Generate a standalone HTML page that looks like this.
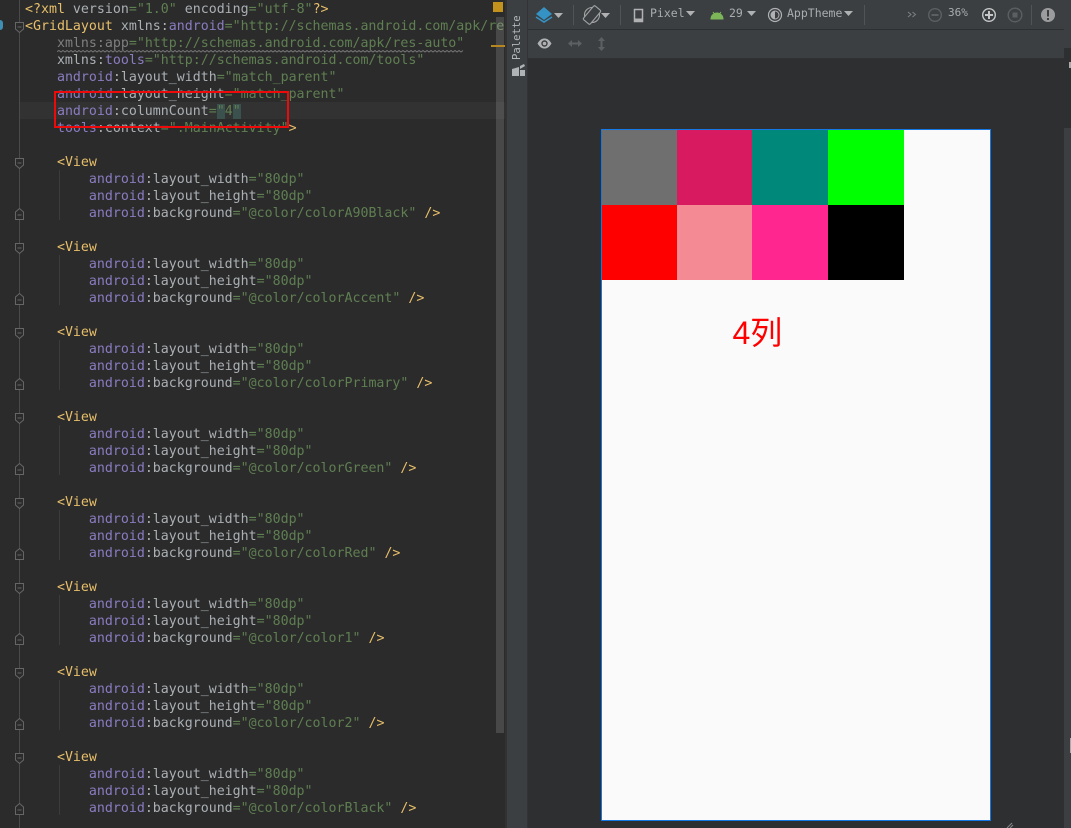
<!DOCTYPE html>
<html><head><meta charset="utf-8">
<style>
html,body{margin:0;padding:0;background:#2d2f31;width:1071px;height:828px;overflow:hidden}
.a{position:absolute}
#ed{left:0;top:0;width:505px;height:828px;background:#2b2b2b;overflow:hidden}
pre{position:absolute;left:25px;top:1px;margin:0;font:13.28px/17px "DejaVu Sans Mono","Liberation Mono",monospace;color:#aab0b4;white-space:pre;width:480px;overflow:hidden}
.t{color:#e8bf6a}.n{color:#8a7cc0}.s{color:#5f7f52}.h{background:#3b514d}
.g{position:absolute;width:1px;background:#3b3b3b}
.ui{font:11.5px/14px "DejaVu Sans Mono","Liberation Mono",monospace;color:#a9adb0;position:absolute}
</style></head><body>
<div class="a" id="ed">
<div class="a" style="left:20px;top:102px;width:485px;height:17px;background:#323232"></div>
<div class="a" style="left:19px;top:0;width:1px;height:828px;background:#4a4a4a"></div>
<div class="g" style="left:59px;top:170px;height:50px"></div>
<div class="g" style="left:59px;top:255px;height:50px"></div>
<div class="g" style="left:59px;top:340px;height:50px"></div>
<div class="g" style="left:59px;top:425px;height:50px"></div>
<div class="g" style="left:59px;top:510px;height:50px"></div>
<div class="g" style="left:59px;top:595px;height:50px"></div>
<div class="g" style="left:59px;top:680px;height:50px"></div>
<div class="g" style="left:59px;top:765px;height:50px"></div>
<svg class="a" style="left:57px;top:50px" width="408" height="3"><path d="M0 1.5 L2 .5 L4 2 L6 .5 L8 2 L10 .5 L12 2 L14 .5 L16 2 L18 .5 L20 2 L22 .5 L24 2 L26 .5 L28 2 L30 .5 L32 2 L34 .5 L36 2 L38 .5 L40 2 L42 .5 L44 2 L46 .5 L48 2 L50 .5 L52 2 L54 .5 L56 2 L58 .5 L60 2 L62 .5 L64 2 L66 .5 L68 2 L70 .5 L72 2 L74 .5 L76 2 L78 .5 L80 2 L82 .5 L84 2 L86 .5 L88 2 L90 .5 L92 2 L94 .5 L96 2 L98 .5 L100 2 L102 .5 L104 2 L106 .5 L108 2 L110 .5 L112 2 L114 .5 L116 2 L118 .5 L120 2 L122 .5 L124 2 L126 .5 L128 2 L130 .5 L132 2 L134 .5 L136 2 L138 .5 L140 2 L142 .5 L144 2 L146 .5 L148 2 L150 .5 L152 2 L154 .5 L156 2 L158 .5 L160 2 L162 .5 L164 2 L166 .5 L168 2 L170 .5 L172 2 L174 .5 L176 2 L178 .5 L180 2 L182 .5 L184 2 L186 .5 L188 2 L190 .5 L192 2 L194 .5 L196 2 L198 .5 L200 2 L202 .5 L204 2 L206 .5 L208 2 L210 .5 L212 2 L214 .5 L216 2 L218 .5 L220 2 L222 .5 L224 2 L226 .5 L228 2 L230 .5 L232 2 L234 .5 L236 2 L238 .5 L240 2 L242 .5 L244 2 L246 .5 L248 2 L250 .5 L252 2 L254 .5 L256 2 L258 .5 L260 2 L262 .5 L264 2 L266 .5 L268 2 L270 .5 L272 2 L274 .5 L276 2 L278 .5 L280 2 L282 .5 L284 2 L286 .5 L288 2 L290 .5 L292 2 L294 .5 L296 2 L298 .5 L300 2 L302 .5 L304 2 L306 .5 L308 2 L310 .5 L312 2 L314 .5 L316 2 L318 .5 L320 2 L322 .5 L324 2 L326 .5 L328 2 L330 .5 L332 2 L334 .5 L336 2 L338 .5 L340 2 L342 .5 L344 2 L346 .5 L348 2 L350 .5 L352 2 L354 .5 L356 2 L358 .5 L360 2 L362 .5 L364 2 L366 .5 L368 2 L370 .5 L372 2 L374 .5 L376 2 L378 .5 L380 2 L382 .5 L384 2 L386 .5 L388 2 L390 .5 L392 2 L394 .5 L396 2 L398 .5 L400 2 L402 .5 L404 2 L406 .5" fill="none" stroke="#777" stroke-width="1"/></svg>
<pre><span class="t">&lt;?xml</span> version<span class="s">="1.0"</span> encoding<span class="s">="utf-8"</span><span class="t">?&gt;</span>
<span class="t">&lt;GridLayout</span> xmlns:<span class="n">android</span><span class="s">="http://schemas.android.com/apk/res/android"</span>
    <span style="color:#7f7f7f">xmlns:app</span><span class="s">="http://schemas.android.com/apk/res-auto"</span>
    xmlns:<span class="n">tools</span><span class="s">="http://schemas.android.com/tools"</span>
    <span class="n">android</span>:layout_width<span class="s">="match_parent"</span>
    <span class="n">android</span>:layout_height<span class="s">="match_parent"</span>
    <span class="n">android</span>:columnCount<span class="s">=<span class="h">"</span>4<span class="h">"</span></span>
    <span class="n">tools</span>:context<span class="s">=".MainActivity"</span><span class="t">&gt;</span>

    <span class="t">&lt;View</span>
        <span class="n">android</span>:layout_width<span class="s">="80dp"</span>
        <span class="n">android</span>:layout_height<span class="s">="80dp"</span>
        <span class="n">android</span>:background<span class="s">="@color/colorA90Black"</span> <span class="t">/&gt;</span>

    <span class="t">&lt;View</span>
        <span class="n">android</span>:layout_width<span class="s">="80dp"</span>
        <span class="n">android</span>:layout_height<span class="s">="80dp"</span>
        <span class="n">android</span>:background<span class="s">="@color/colorAccent"</span> <span class="t">/&gt;</span>

    <span class="t">&lt;View</span>
        <span class="n">android</span>:layout_width<span class="s">="80dp"</span>
        <span class="n">android</span>:layout_height<span class="s">="80dp"</span>
        <span class="n">android</span>:background<span class="s">="@color/colorPrimary"</span> <span class="t">/&gt;</span>

    <span class="t">&lt;View</span>
        <span class="n">android</span>:layout_width<span class="s">="80dp"</span>
        <span class="n">android</span>:layout_height<span class="s">="80dp"</span>
        <span class="n">android</span>:background<span class="s">="@color/colorGreen"</span> <span class="t">/&gt;</span>

    <span class="t">&lt;View</span>
        <span class="n">android</span>:layout_width<span class="s">="80dp"</span>
        <span class="n">android</span>:layout_height<span class="s">="80dp"</span>
        <span class="n">android</span>:background<span class="s">="@color/colorRed"</span> <span class="t">/&gt;</span>

    <span class="t">&lt;View</span>
        <span class="n">android</span>:layout_width<span class="s">="80dp"</span>
        <span class="n">android</span>:layout_height<span class="s">="80dp"</span>
        <span class="n">android</span>:background<span class="s">="@color/color1"</span> <span class="t">/&gt;</span>

    <span class="t">&lt;View</span>
        <span class="n">android</span>:layout_width<span class="s">="80dp"</span>
        <span class="n">android</span>:layout_height<span class="s">="80dp"</span>
        <span class="n">android</span>:background<span class="s">="@color/color2"</span> <span class="t">/&gt;</span>

    <span class="t">&lt;View</span>
        <span class="n">android</span>:layout_width<span class="s">="80dp"</span>
        <span class="n">android</span>:layout_height<span class="s">="80dp"</span>
        <span class="n">android</span>:background<span class="s">="@color/colorBlack"</span> <span class="t">/&gt;</span></pre>
<div class="a" style="left:0;top:20px;width:3px;height:10px;border-radius:0 5px 5px 0;background:#3f8fb5"></div>
<svg class="a" style="left:15px;top:22px" width="9" height="800" fill="#2b2b2b" stroke="#666" stroke-width="1">
<path d="M.5 .5H8.5V7L4.5 10.5L.5 7Z M2.5 5H6.5"/>
<path d="M.5 136.5H8.5V143L4.5 146.5L.5 143Z M2.5 141H6.5"/>
<path d="M.5 221.5H8.5V228L4.5 231.5L.5 228Z M2.5 226H6.5"/>
<path d="M.5 306.5H8.5V313L4.5 316.5L.5 313Z M2.5 311H6.5"/>
<path d="M.5 391.5H8.5V398L4.5 401.5L.5 398Z M2.5 396H6.5"/>
<path d="M.5 476.5H8.5V483L4.5 486.5L.5 483Z M2.5 481H6.5"/>
<path d="M.5 561.5H8.5V568L4.5 571.5L.5 568Z M2.5 566H6.5"/>
<path d="M.5 646.5H8.5V653L4.5 656.5L.5 653Z M2.5 651H6.5"/>
<path d="M.5 731.5H8.5V738L4.5 741.5L.5 738Z M2.5 736H6.5"/>
<path d="M.5 197.5H8.5V190L4.5 186.5L.5 190Z M2.5 193H6.5"/>
<path d="M.5 282.5H8.5V275L4.5 271.5L.5 275Z M2.5 278H6.5"/>
<path d="M.5 367.5H8.5V360L4.5 356.5L.5 360Z M2.5 363H6.5"/>
<path d="M.5 452.5H8.5V445L4.5 441.5L.5 445Z M2.5 448H6.5"/>
<path d="M.5 537.5H8.5V530L4.5 526.5L.5 530Z M2.5 533H6.5"/>
<path d="M.5 622.5H8.5V615L4.5 611.5L.5 615Z M2.5 618H6.5"/>
<path d="M.5 707.5H8.5V700L4.5 696.5L.5 700Z M2.5 703H6.5"/>
<path d="M.5 792.5H8.5V785L4.5 781.5L.5 785Z M2.5 788H6.5"/>
</svg>
<div class="a" style="left:496px;top:17px;width:8px;height:716px;background:rgba(255,255,255,.14)"></div>
<div class="a" style="left:493px;top:2px;width:10px;height:10px;background:#c2921d"></div>
<div class="a" style="left:491px;top:45px;width:14px;height:2px;background:#b8861f"></div>
</div>
<div class="a" style="left:505px;top:0;width:2px;height:828px;background:#323232"></div>
<div class="a" style="left:507px;top:0;width:20px;height:828px;background:#3c3f41"></div>
<div class="a" style="left:527px;top:0;width:1px;height:828px;background:#313335"></div>
<div class="a" style="left:528px;top:0;width:536px;height:29px;background:#3c3f41"></div>
<div class="a" style="left:528px;top:29px;width:536px;height:1px;background:#2d2f31"></div>
<div class="a" style="left:528px;top:30px;width:536px;height:28px;background:#3c3f41"></div>
<div class="a" style="left:528px;top:58px;width:536px;height:1px;background:#2f3133"></div>
<div class="a" style="left:1064px;top:0;width:7px;height:828px;background:#3c3f41"></div>
<div class="a" style="left:1064px;top:48px;width:7px;height:80px;background:#2d2f31"></div>
<div class="a" style="left:1069px;top:62px;width:2px;height:6px;background:#aaa"></div>
<div class="a" style="left:1070px;top:738px;width:1px;height:15px;background:#aaa"></div>
<div class="ui" style="left:510px;top:16px;width:14px;height:44px;writing-mode:vertical-rl;transform:rotate(180deg);font-size:10.6px;line-height:14px;text-align:left;color:#b4b8ba">Palette</div>
<svg class="a" style="left:512px;top:64px" width="13" height="12"><path d="M0 12V5L7 3V12Z M8 2L12 0L13 2L8 5Z M8 6H13V12H8Z" fill="#b0b3b5"/></svg>

<svg class="a" style="left:534px;top:5px" width="30" height="20">
<path d="M2 12L10 17L18 12" fill="none" stroke="#3592c4" stroke-width="1.6"/>
<path d="M10 2L18 9L10 15L2 9Z" fill="#3592c4"/>
<path d="M20 8H29L24.5 13Z" fill="#afb1b3"/></svg>
<div class="a" style="left:573px;top:5px;width:1px;height:20px;background:#515456"></div>
<svg class="a" style="left:582px;top:5px" width="30" height="20" fill="none" stroke="#a0a2a4" stroke-width="1.1">
<circle cx="10" cy="10" r="7.5"/>
<rect x="5.5" y="1" width="9" height="18" rx="1.5" transform="rotate(40 10 10)" fill="#3c3f41"/>
<path d="M19 8H28L23.5 13Z" fill="#afb1b3" stroke="none"/></svg>
<div class="a" style="left:620px;top:5px;width:1px;height:20px;background:#515456"></div>

<svg class="a" style="left:633px;top:8px" width="11" height="15"><path d="M1.5 1.5H9.5V13.5H1.5Z" fill="none" stroke="#afb1b3" stroke-width="1.5"/><path d="M1 10.5H10V14H1Z" fill="#afb1b3"/></svg>
<div class="ui" style="left:650px;top:6px">Pixel</div>
<svg class="a" style="left:686px;top:11px" width="10" height="6"><path d="M0 0H9L4.5 5Z" fill="#afb1b3"/></svg>
<svg class="a" style="left:710px;top:10px" width="14" height="10"><path d="M1 9A6 6 0 0 1 13 9Z M3 2L4.5 4 M11 2L9.5 4" fill="#7cb658" stroke="#7cb658"/></svg>
<div class="ui" style="left:729px;top:6px">29</div>
<svg class="a" style="left:747px;top:11px" width="10" height="6"><path d="M0 0H9L4.5 5Z" fill="#afb1b3"/></svg>
<svg class="a" style="left:767px;top:7px" width="16" height="16"><circle cx="8" cy="8" r="6.5" fill="none" stroke="#afb1b3" stroke-width="1.2"/><path d="M8 4A4 4 0 0 0 8 12Z" fill="#afb1b3"/><circle cx="8" cy="8" r="4" fill="none" stroke="#afb1b3"/></svg>
<div class="ui" style="left:787px;top:6px">AppTheme</div>
<svg class="a" style="left:844px;top:11px" width="10" height="6"><path d="M0 0H9L4.5 5Z" fill="#afb1b3"/></svg>
<div class="a" style="left:864px;top:5px;width:1px;height:20px;background:#515456"></div>

<svg class="a" style="left:907px;top:10px" width="10" height="9" fill="none" stroke="#7d8082"><path d="M1 2L4 4.5L1 7 M5.5 2L8.5 4.5L5.5 7"/></svg>
<svg class="a" style="left:927px;top:7px" width="16" height="16" fill="none" stroke="#5c5f61" stroke-width="1.4"><circle cx="8" cy="8" r="6.3"/><path d="M4.5 8H11.5" stroke-width="2"/></svg>
<div class="ui" style="left:948px;top:6px;font-size:11px">36%</div>
<svg class="a" style="left:981px;top:7px" width="16" height="16" fill="none" stroke="#c4c6c8" stroke-width="1.4"><circle cx="8" cy="8" r="6.3"/><path d="M4 8H12M8 4V12" stroke-width="2"/></svg>
<svg class="a" style="left:1007px;top:7px" width="16" height="16" fill="none" stroke="#5c5f61" stroke-width="1.4"><circle cx="8" cy="8" r="6.8"/><path d="M5.5 5.5H10.5V10.5H5.5Z" fill="#5c5f61" stroke="none"/></svg>
<div class="a" style="left:1031px;top:5px;width:1px;height:20px;background:#515456"></div>
<svg class="a" style="left:1040px;top:7px" width="16" height="16"><circle cx="8" cy="8" r="7" fill="#9a9c9e"/><path d="M7 3H9V9.5H7Z M7 11H9V13H7Z" fill="#3c3f41"/></svg>

<svg class="a" style="left:537px;top:38px" width="15" height="11"><path d="M.5 5.5C3 1.5 5 .5 7.5 .5S12 1.5 14.5 5.5C12 9.5 10 10.5 7.5 10.5S3 9.5 .5 5.5Z" fill="#afb1b3"/><circle cx="7.5" cy="5.5" r="3.2" fill="#3c3f41"/><circle cx="7.5" cy="5.5" r="1.8" fill="#afb1b3"/></svg>
<svg class="a" style="left:568px;top:39px" width="14" height="9" fill="#5d6062"><path d="M0 4.5L4 1V3.5H10V1L14 4.5L10 8V5.5H4V8Z"/></svg>
<svg class="a" style="left:597px;top:37px" width="9" height="14" fill="#5d6062"><path d="M4.5 0L8 4H5.5V10H8L4.5 14L1 10H3.5V4H1Z"/></svg>

<div class="a" style="left:601px;top:129px;width:390px;height:692px;background:#fafafa;box-sizing:border-box;border:1px solid #1478e6"></div>
<div class="a" style="left:602px;top:130px;width:75px;height:75px;background:#6f6f6f"></div>
<div class="a" style="left:677px;top:130px;width:75px;height:75px;background:#d81b60"></div>
<div class="a" style="left:752px;top:130px;width:76px;height:75px;background:#00897b"></div>
<div class="a" style="left:828px;top:130px;width:76px;height:75px;background:#00ff00"></div>
<div class="a" style="left:602px;top:205px;width:75px;height:75px;background:#ff0000"></div>
<div class="a" style="left:677px;top:205px;width:75px;height:75px;background:#f48a93"></div>
<div class="a" style="left:752px;top:205px;width:76px;height:75px;background:#ff2690"></div>
<div class="a" style="left:828px;top:205px;width:76px;height:75px;background:#000"></div>
<div class="a" style="left:732.5px;top:314px;font:32px/38px 'Liberation Sans','Noto Sans CJK SC',sans-serif;color:#f00;white-space:nowrap">4列</div>
<svg class="a" style="left:1006px;top:822px" width="8" height="6"><path d="M1 6L6 1M4 6L7 3" stroke="#888" fill="none"/></svg>

<div class="a" style="left:54px;top:91px;width:235px;height:37px;box-sizing:border-box;border:2px solid #ee0a0a"></div>
</body></html>
